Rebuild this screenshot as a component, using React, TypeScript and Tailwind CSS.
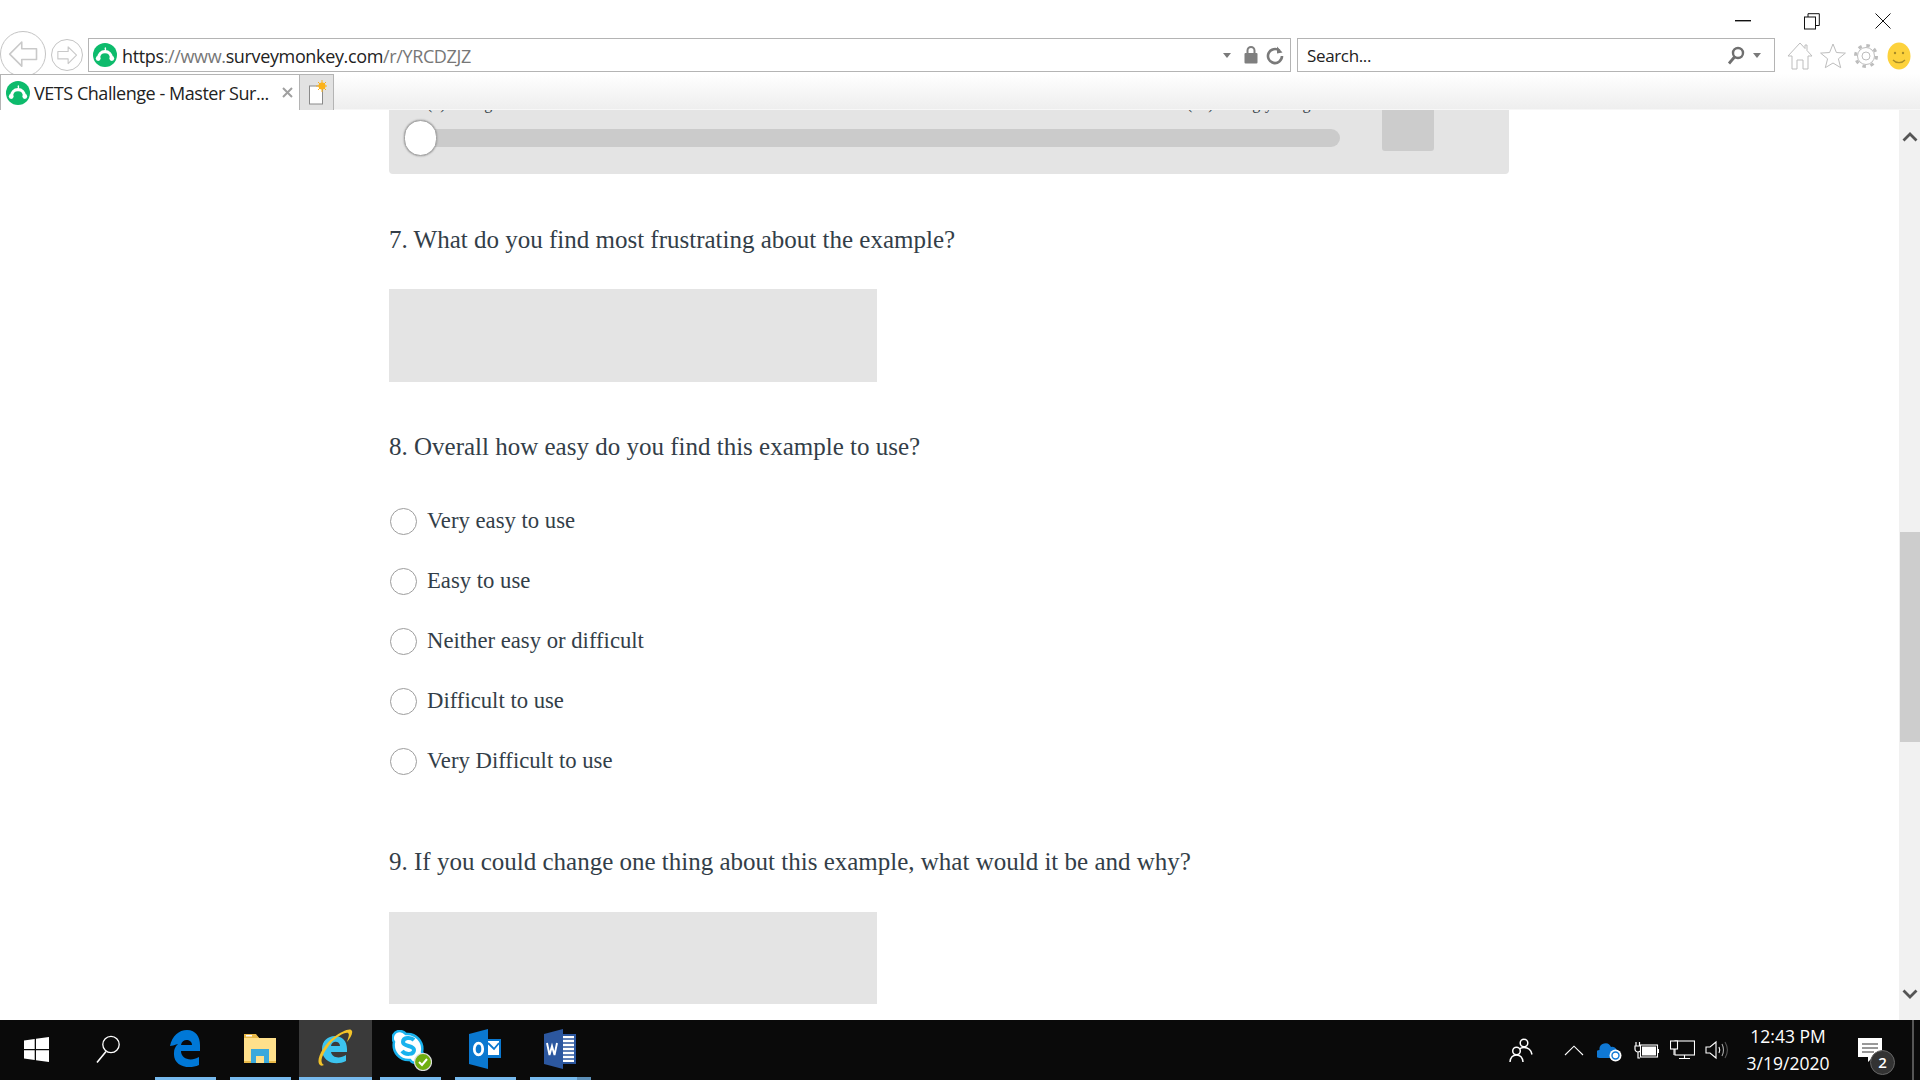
import React from "react";

const SANS = "font-['Open_Sans',sans-serif]";
const SERIF = "font-['Liberation_Serif',serif]";

function Monkey({ size = 24 }: { size?: number }) {
  return (
    <svg width={size} height={size} viewBox="0 0 24 24" className="shrink-0">
      <circle cx="12" cy="12" r="12" fill="#0dbb6c" />
      <path d="M5.500 15.500c0-4 2.800-6.800 6.500-6.800s6.500 2.800 6.500 6.800" fill="none" stroke="#fff" strokeWidth="3.200" />
      <circle cx="5.200" cy="15.500" r="2.400" fill="#fff" />
      <circle cx="18.800" cy="15.500" r="2.400" fill="#fff" />
      <path d="M12 4.500c.8 1 .8 2 0 3.500" fill="none" stroke="#fff" strokeWidth="1.400" />
    </svg>
  );
}

function NavButton({ size, dir }: { size: number; dir: "l" | "r" }) {
  return (
    <div className="shrink-0 rounded-full border border-[#c4c4c4] bg-white flex items-center justify-center" style={{ width: size, height: size }}>
      <svg width={size * 0.7} height={size * 0.7} viewBox="0 0 24 24" className={dir === "r" ? "rotate-180" : ""}>
        <path d="M11 3 2 12l9 9v-5h11V8H11z" fill="none" stroke="#c9c9c9" strokeWidth="1.200" strokeLinejoin="round" />
      </svg>
    </div>
  );
}

function Caret() {
  return <div className="w-0 h-0 border-x-[4px] border-x-transparent border-t-[5px] border-t-[#7a7a7a]" />;
}

function BrowserChrome() {
  return (
    <div className={`h-[110px] shrink-0 bg-white ${SANS} flex flex-col`}>
      <div className="h-[36px] flex justify-end items-center text-black">
        <svg width="16" height="2" viewBox="0 0 16 2" className="mr-[53px] mt-[6px]"><rect width="16" height="1.400" fill="#111" /></svg>
        <svg width="16" height="17" viewBox="0 0 16 17" className="mr-[55px] mt-[6px]">
          <rect x="0.500" y="4" width="11" height="12" fill="none" stroke="#111" />
          <path d="M4 4V.7h11.300v11.800H11.500" fill="none" stroke="#111" />
        </svg>
        <svg width="16" height="16" viewBox="0 0 16 16" className="mr-[29px] mt-[6px]"><path d="M.5.500l15 15M15.500.500l-15 15" stroke="#111" strokeWidth="1" /></svg>
      </div>
      <div className="h-[38px] flex items-start relative">
        <div className="mt-[-5px]"><NavButton size={46} dir="l" /></div>
        <div className="ml-[5px] mt-[3px]"><NavButton size={32} dir="r" /></div>
        <div className="ml-[5px] mt-[2px] w-[1203px] h-[34px] border border-[#b4b4b4] flex items-center pl-[4px] pr-[6px]">
          <Monkey size={24} />
          <div className="ml-[5px] mt-[2px] text-[18px] tracking-[-0.36px] text-[#222] flex-1 whitespace-nowrap">
            https<span className="text-[#777]">://www.</span>surveymonkey.com<span className="text-[#777]">/r/YRCDZJZ</span>
          </div>
          <Caret />
          <svg width="14" height="18" viewBox="0 0 14 18" className="ml-[13px]">
            <rect x="0.500" y="7" width="13" height="10.500" rx="1" fill="#7f7f7f" />
            <path d="M3.500 7V4.500a3.500 3.500 0 0 1 7 0V7" fill="none" stroke="#7f7f7f" strokeWidth="2" />
          </svg>
          <svg width="18" height="19" viewBox="0 0 18 19" className="ml-[8px]">
            <path d="M13.500 4.700A7 7 0 1 0 16 10" fill="none" stroke="#7a7a7a" strokeWidth="2.600" />
            <path d="M11 0.500v7l5.500-1z" fill="#7a7a7a" />
          </svg>
        </div>
        <div className="ml-[6px] mt-[2px] w-[478px] h-[34px] border border-[#b4b4b4] flex items-center pl-[9px] pr-[13px] text-[17px] tracking-[-0.35px] text-[#222]">
          <span className="flex-1 mt-[2px]">Search...</span>
          <svg width="18" height="19" viewBox="0 0 18 19" className="-ml-[2px]">
            <circle cx="11" cy="7" r="5" fill="none" stroke="#6f6f6f" strokeWidth="2.400" />
            <path d="M7.500 11 2 17.500" stroke="#6f6f6f" strokeWidth="2.800" />
          </svg>
          <div className="ml-[8px]"><Caret /></div>
        </div>
        <div className="ml-[12px] mt-[6px] flex items-center gap-[7px]">
          <svg width="26" height="28" viewBox="0 0 26 28"><path d="M13 1 1 14h4v13h5v-9h6v9h5V14h4L20 8.500V3h-2v3.500z" fill="#fff" stroke="#bdbdbd" /></svg>
          <svg width="26" height="28" viewBox="0 0 26 28"><path d="m13 2 3.400 8.500 9 .6-7 5.700 2.300 8.900L13 21l-7.700 4.700 2.300-8.900-7-5.700 9-.6z" fill="#fff" stroke="#bdbdbd" /></svg>
          <svg width="26" height="28" viewBox="0 0 26 28">
            <circle cx="13" cy="14" r="8.500" fill="none" stroke="#bdbdbd" strokeWidth="1" />
            <circle cx="13" cy="14" r="4" fill="none" stroke="#bdbdbd" />
            <circle cx="13" cy="14" r="10.500" fill="none" stroke="#bdbdbd" strokeWidth="3" strokeDasharray="3.500 4.750" />
          </svg>
          <svg width="24" height="28" viewBox="0 0 24 28" className="ml-[1px]">
            <ellipse cx="12" cy="14" rx="11.500" ry="13.500" fill="#fdd23c" />
            <circle cx="8" cy="11" r="1.200" fill="#a88d28" />
            <circle cx="16" cy="11" r="1.200" fill="#a88d28" />
            <path d="M6 18c3 3.500 9 3.500 12 0" fill="none" stroke="#a88d28" strokeWidth="1.200" />
          </svg>
        </div>
      </div>
      <div className="h-[36px] flex bg-gradient-to-b from-white to-[#eeeeee] border-b border-[#f7f7f7]">
        <div className="w-[300px] h-[36px] bg-white border-t border-x border-[#b4b4b4] flex items-center pl-[5px] pr-[6px] text-[18px] tracking-[-0.46px] text-[#222] z-10">
          <Monkey size={24} />
          <span className="ml-[4px] mt-[1px] flex-1 whitespace-nowrap">VETS Challenge - Master Sur...</span>
          <svg width="11" height="11" viewBox="0 0 11 11"><path d="m1 1 9 9m0-9-9 9" stroke="#a0a0a0" strokeWidth="2" /></svg>
        </div>
        <div className="w-[34px] h-[36px] bg-[#e2e2e2] border-t border-r border-[#b4b4b4] flex items-center justify-center">
          <svg width="20" height="26" viewBox="0 0 20 26">
            <rect x="2.500" y="6" width="13" height="18" fill="#fff" stroke="#8a8a8a" />
            <circle cx="15" cy="6" r="3.500" fill="#fbb21a" />
            <path d="M15 0v12M9 6h12M11 2l8 8m0-8-8 8" stroke="#fbb21a" strokeWidth="1" />
          </svg>
        </div>
      </div>
    </div>
  );
}

function Question({ children, className = "" }: { children: React.ReactNode; className?: string }) {
  return <div className={`text-[25px] leading-[30px] text-[#333e48] whitespace-nowrap ${className}`}>{children}</div>;
}

function Radio({ label }: { label: string }) {
  return (
    <div className="h-[60px] flex items-center pl-[1px]">
      <div className="w-[27px] h-[27px] rounded-full border-[1.500px] border-[#9d9d9d] bg-white shrink-0" />
      <span className="ml-[10px] text-[22.700px] text-[#333e48] whitespace-nowrap">{label}</span>
    </div>
  );
}

function SlideArea() {
  return (
    <div className="w-[1120px] h-[64px] bg-[#e4e4e4] rounded-b-[4px] relative overflow-hidden pl-[15px] pt-[19px] flex items-start">
      <span className="absolute top-[-18px] left-[38px] text-[16px] text-[#333e48] whitespace-nowrap">(1) Strong</span>
      <span className="absolute top-[-18px] left-[798px] text-[16px] text-[#333e48] whitespace-nowrap">(10) Strongly disagree</span>
      <div className="relative w-[935px] h-[18px] rounded-full bg-[#cbcbcb] ml-[1px]">
        <div className="absolute left-[-1px] top-[-9px] w-[33px] h-[36px] rounded-full bg-white border border-[#a5a5a5] shadow-[0_0_2px_#888]" />
      </div>
      <div className="ml-[42px] mt-[-19px] w-[52px] h-[41px] rounded-b-[3px] bg-[#cccccc]" />
    </div>
  );
}

function Scrollbar() {
  return (
    <div className="w-[21px] shrink-0 bg-[#f1f1f1] flex flex-col items-center">
      <svg width="16" height="10" viewBox="0 0 16 10" className="mt-[22px] shrink-0"><path d="M1.500 8.500 8 2l6.500 6.500" fill="none" stroke="#555" strokeWidth="2.800" /></svg>
      <div className="w-[20px] self-end h-[210px] bg-[#cdcdcd] mt-[390px]" />
      <div className="flex-1" />
      <svg width="16" height="10" viewBox="0 0 16 10" className="mb-[21px] shrink-0"><path d="M1.500 1.500 8 8l6.500-6.500" fill="none" stroke="#555" strokeWidth="2.800" /></svg>
    </div>
  );
}

function Page() {
  return (
    <div className="flex-1 min-h-0 flex bg-white">
      <div className={`flex-1 min-w-0 overflow-hidden pl-[389px] ${SERIF}`}>
        <SlideArea />
        <Question className="mt-[51px]">7. What do you find most frustrating about the example?</Question>
        <div className="mt-[34px] w-[488px] h-[93px] bg-[#e4e4e4]" />
        <Question className="mt-[50px]">8. Overall how easy do you find this example to use?</Question>
        <div className="mt-[29px]">
          <Radio label="Very easy to use" />
          <Radio label="Easy to use" />
          <Radio label="Neither easy or difficult" />
          <Radio label="Difficult to use" />
          <Radio label="Very Difficult to use" />
        </div>
        <Question className="mt-[56px]">9. If you could change one thing about this example, what would it be and why?</Question>
        <div className="mt-[35px] w-[488px] h-[92px] bg-[#e4e4e4]" />
      </div>
      <Scrollbar />
    </div>
  );
}

function TaskItem({ width, active, children, extra }: { width: number; active?: boolean; children: React.ReactNode; extra?: boolean }) {
  return (
    <div className={`relative h-[60px] shrink-0 flex items-center justify-center ${active ? "bg-[#3a3a3a]" : ""}`} style={{ width }}>
      {children}
      <div className="absolute bottom-0 left-0 right-0 h-[3px] bg-[#76b9ed]" />
      {extra && <div className="absolute bottom-0 right-0 w-[14px] h-[3px] bg-[#5c8fb8]" />}
    </div>
  );
}

function EdgeIcon() {
  return (
    <svg width="32" height="40" viewBox="0 0 32 40" className="-mt-[3px] -ml-[1px]">
      <path d="M1 17C3 7 10 1 18 1c9 0 13 7 13 15v6H12c0 8 10 11 18 6v8c-11 5-26 1-25-12 0-4 1-6 4-9-4 1-6 2-8 2zM12 16h11c0-6-10-7-11 0z" fill="#0078d7" fillRule="evenodd" />
    </svg>
  );
}

function FolderIcon() {
  return (
    <svg width="32" height="32" viewBox="0 0 32 32" className="-mt-[3px] -ml-[1px]">
      <path d="M0 3h13l2 2h17v25H0z" fill="#ffe08b" />
      <path d="M0 1h12l3 4H0z" fill="#e9b949" />
      <rect x="2" y="2" width="6" height="1.500" fill="#fff" />
      <path d="M7 30V16h18v14h-5v-7h-8v7z" fill="#39a9dc" />
      <rect x="0" y="28" width="7" height="2" fill="#e9b949" />
      <rect x="25" y="28" width="7" height="2" fill="#e9b949" />
    </svg>
  );
}

function IEIcon() {
  return (
    <svg width="36" height="42" viewBox="0 0 36 42" className="-mt-[3px] -ml-[1px]">
      <path d="M5 21c0-8 6-13 13-13s12 5 12 13v3H14c1 6 9 7 15 3v6c-10 5-24 2-24-12zM14 18h9c0-5-8-6-9 0z" fill="#3cc4ef" fillRule="evenodd" />
      <path d="M3 37C-2 33 6 17 17 9 25 3 34-1 35 3c1 3-2 7-5 11 1-4 3-8 1-9-3-1-12 4-18 11C7 24 1 34 7 37c-2 1-3 1-4 0z" fill="#f2c329" />
    </svg>
  );
}

function SkypeIcon() {
  return (
    <div className="relative w-[38px] h-[40px] -mt-[1px]">
      <svg width="32" height="36" viewBox="0 0 32 36">
        <path d="M8 1a7 7 0 0 0-6 11C0 22 8 31 18 30a7 7 0 0 0 12-8C32 12 24 3 14 4c-2-2-4-3-6-3z" fill="#fff" stroke="#19b2ee" strokeWidth="2.500" />
        <path d="M22 10c-3-3-11-3-11 2 0 5 11 3 11 8 0 5-9 5-12 1" fill="none" stroke="#19b2ee" strokeWidth="4" />
      </svg>
      <svg width="18" height="18" viewBox="0 0 18 18" className="absolute right-[-2px] bottom-[-1px]">
        <circle cx="9" cy="9" r="8.500" fill="#6fae11" stroke="#ddd" strokeWidth="1.200" />
        <path d="m5 9 3 3 5-6" fill="none" stroke="#fff" strokeWidth="2" />
      </svg>
    </div>
  );
}

function OutlookIcon() {
  return (
    <svg width="32" height="40" viewBox="0 0 32 40" className="-mt-[3px] -ml-[1px]">
      <rect x="17" y="10" width="15" height="19" fill="#0a78d0" />
      <path d="M19 12h11v14H19z" fill="#fff" />
      <path d="m19 14 6 6 5-6" fill="none" stroke="#0a78d0" strokeWidth="1.800" />
      <path d="M0 5 19 0v40L0 35z" fill="#0a78d0" />
      <ellipse cx="9.500" cy="20" rx="4.200" ry="5.800" fill="none" stroke="#fff" strokeWidth="2.800" />
    </svg>
  );
}

function WordIcon() {
  return (
    <svg width="32" height="40" viewBox="0 0 32 40" className="-mt-[3px] -ml-[2px]">
      <rect x="16" y="5" width="16" height="30" fill="#2c579f" />
      <rect x="18" y="7" width="12" height="26" fill="#fff" />
      <path d="M18 10h12M18 14h12M18 18h12M18 22h12M18 26h12M18 30h12" stroke="#2c579f" strokeWidth="1.600" />
      <path d="M0 5 19 0v40L0 35z" fill="#2c579f" />
      <path d="m3 14 2.500 12 2.500-9 2.500 9L13 14" fill="none" stroke="#fff" strokeWidth="1.900" />
    </svg>
  );
}

function Tray() {
  return (
    <div className="flex items-center h-full">
      <svg width="24" height="26" viewBox="0 0 24 26" className="mr-[31px]">
        <circle cx="15" cy="6" r="3.800" fill="none" stroke="#fff" strokeWidth="1.500" />
        <path d="M8 17c1-5 3-6.500 7-6.500s7 2 8 7" fill="none" stroke="#fff" strokeWidth="1.500" />
        <circle cx="7.500" cy="14" r="3.800" fill="#0a0a0a" stroke="#fff" strokeWidth="1.500" />
        <path d="M1 25c.5-5 3-7 6.500-7s6 2 6.500 7" fill="none" stroke="#fff" strokeWidth="1.500" />
      </svg>
      <svg width="20" height="11" viewBox="0 0 20 11" className="mr-[13px]"><path d="M1 10 10 1.200 19 10" fill="none" stroke="#fff" strokeWidth="1.100" /></svg>
      <svg width="25" height="20" viewBox="0 0 25 20" className="mr-[12px] mt-[3px]">
        <path d="M3 16a4 4 0 0 1-.5-8A6 6 0 0 1 14 5a5 5 0 0 1 6 6v5z" fill="#0f78d4" />
        <circle cx="18.500" cy="13.500" r="6" fill="#fff" />
        <circle cx="18.500" cy="13.500" r="3.500" fill="none" stroke="#0f78d4" strokeWidth="1.400" />
      </svg>
      <svg width="25" height="20" viewBox="0 0 25 20" className="mr-[11px]">
        <path d="M2 2v4M5.500 2v4M1 6h6v3a3 3 0 0 1-6 0zM4 12v6h2" fill="none" stroke="#fff" strokeWidth="1.200" />
        <rect x="6.500" y="5" width="17" height="12" fill="#0a0a0a" stroke="#fff" strokeWidth="1.100" />
        <rect x="8" y="6.500" width="14" height="9" fill="#fff" />
        <rect x="23.800" y="9" width="1.200" height="4" fill="#fff" />
      </svg>
      <svg width="25" height="20" viewBox="0 0 25 20" className="mr-[10px]">
        <rect x="5" y="1" width="19.500" height="14" fill="none" stroke="#fff" strokeWidth="1.100" />
        <rect x="0.500" y="1" width="7" height="8" fill="#0a0a0a" stroke="#fff" strokeWidth="1.100" />
        <path d="M4 9v6M14.500 15v3M9 18.500h11" stroke="#fff" strokeWidth="1.100" />
      </svg>
      <svg width="23" height="20" viewBox="0 0 23 20" className="mr-[14px]">
        <path d="M1 7h4l6-5v16l-6-5H1z" fill="none" stroke="#fff" strokeWidth="1.100" />
        <path d="M14 7c1 2 1 4 0 6" fill="none" stroke="#fff" strokeWidth="1.100" />
        <path d="M17 4c2 4 2 8 0 12" fill="none" stroke="#aaa" strokeWidth="1.100" />
        <path d="M20 2c3 5 3 11 0 16" fill="none" stroke="#555" strokeWidth="1.100" />
      </svg>
      <div className={`w-[92px] text-center text-white text-[17.500px] leading-[27px] ${SANS} whitespace-nowrap`}>
        <div>12:43 PM</div>
        <div>3/19/2020</div>
      </div>
      <div className="relative ml-[24px] w-[26px] h-[24px]">
        <svg width="26" height="26" viewBox="0 0 26 26">
          <path d="M0 0h24v19H15l-5 5v-5H0z" fill="#fff" />
          <path d="M4 6h16M4 10h16M4 14h12" stroke="#333" strokeWidth="1" />
        </svg>
        <div className={`absolute left-[12px] top-[12px] w-[25px] h-[25px] rounded-full bg-[#333] border border-[#666] text-white text-[15px] font-semibold flex items-center justify-center ${SANS}`}>2</div>
      </div>
    </div>
  );
}

function Taskbar() {
  return (
    <div className="h-[60px] shrink-0 bg-[#0a0a0a] flex items-center">
      <div className="w-[72px] flex justify-center">
        <svg width="25" height="25" viewBox="0 0 25 25" className="-mt-[2px]">
          <path d="M0 3.500 10.700 2v10H0zM12 1.800 25 0v12H12zM0 13.300h10.700V23L0 21.500zM12 13.300h13V25l-13-1.800z" fill="#fff" />
        </svg>
      </div>
      <div className="w-[72px] flex justify-center">
        <svg width="26" height="30" viewBox="0 0 26 30" className="-mt-[2px]">
          <circle cx="16" cy="10.500" r="8.200" fill="none" stroke="#fff" strokeWidth="1.300" />
          <path d="m11 17.500-9 11" stroke="#fff" strokeWidth="1.600" />
        </svg>
      </div>
      <div className="ml-[11px] flex">
        <TaskItem width={61}><EdgeIcon /></TaskItem>
        <div className="ml-[14px]"><TaskItem width={61}><FolderIcon /></TaskItem></div>
        <div className="ml-[8px]"><TaskItem width={73} active><IEIcon /></TaskItem></div>
        <div className="ml-[8px]"><TaskItem width={61}><SkypeIcon /></TaskItem></div>
        <div className="ml-[14px]"><TaskItem width={61}><OutlookIcon /></TaskItem></div>
        <div className="ml-[14px]"><TaskItem width={61} extra><WordIcon /></TaskItem></div>
      </div>
      <div className="flex-1" />
      <div className="pr-[36px] h-full relative">
        <Tray />
      </div>
      <div className="absolute right-[6px] bottom-0 w-[2px] h-[60px] bg-[#555]" />
    </div>
  );
}

export default function App() {
  return (
    <div className="w-[1920px] h-[1080px] flex flex-col overflow-hidden relative bg-white">
      <BrowserChrome />
      <Page />
      <Taskbar />
    </div>
  );
}
